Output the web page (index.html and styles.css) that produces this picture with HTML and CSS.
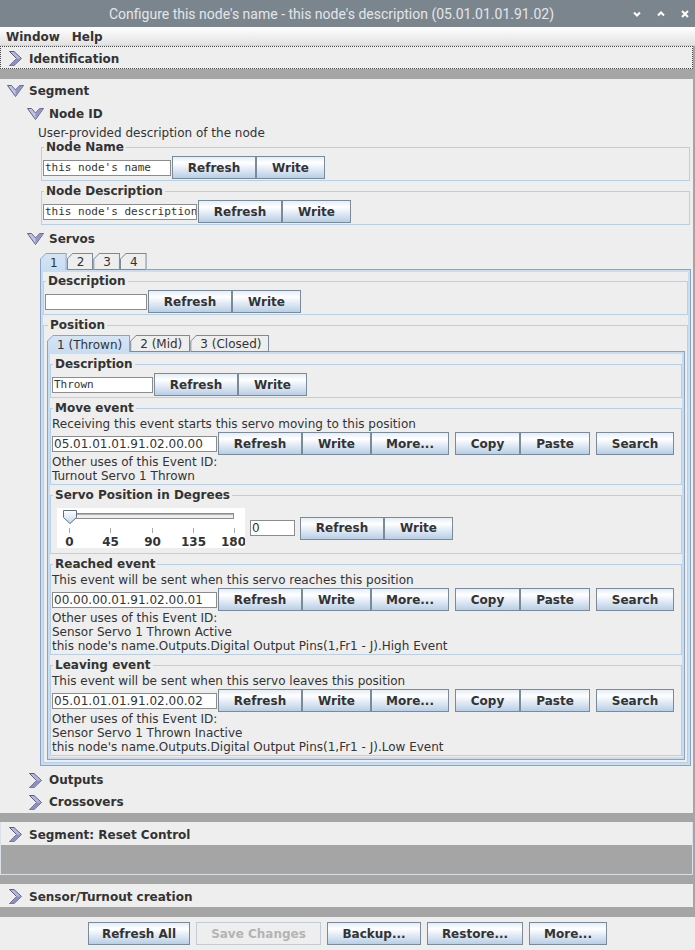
FILE: index.html
```html
<!DOCTYPE html>
<html lang="en">
<head>
<meta charset="utf-8">
<title>Configure this node's name</title>
<link rel="stylesheet" href="styles.css">
</head>
<body>
<svg class="defs" aria-hidden="true">
  <symbol id="chev-r" viewBox="0 0 13 15">
    <polygon points="0.5,0.5 5,0.5 12.5,7.5 5,14.5 0.5,14.5 7.5,7.5" fill="#b7b7dc" stroke="#5e5e82" stroke-width="1" stroke-linejoin="round"/>
    <polygon points="7.5,7.5 12.5,7.5 5,14.5 0.5,14.5" fill="#8f8fbd"/>
  </symbol>
  <symbol id="chev-d" viewBox="0 0 17 12">
    <polygon points="0.5,0.5 4.5,0.5 8.5,5 12.5,0.5 16.5,0.5 8.5,11.5" fill="#c3c3e4" stroke="#616188" stroke-width="1" stroke-linejoin="round"/>
    <polygon points="8.5,5 12.5,0.5 16,1 8.5,10.5" fill="#9494c2"/>
  </symbol>
</svg>

<div class="titlebar">
  <div class="title">Configure this node's name - this node's description (05.01.01.01.91.02)</div>
  <div class="wctl">
    <svg class="wi" viewBox="0 0 8 8"><path d="M1 2.5 L4 5.5 L7 2.5"/></svg>
    <svg class="wi" viewBox="0 0 8 8"><path d="M1 5.5 L4 2.5 L7 5.5"/></svg>
    <svg class="wi" viewBox="0 0 8 8"><path d="M1 1 L7 7 M7 1 L1 7"/></svg>
  </div>
</div>

<div class="menubar"><span class="menu">Window</span><span class="menu">Help</span></div>

<div class="main">
  <div class="head focus">
    <span class="ico r"><svg class="cr"><use href="#chev-r"/></svg></span><span>Identification</span>
  </div>

  <div class="segment">
    <div class="head seghead">
      <span class="ico"><svg class="cd"><use href="#chev-d"/></svg></span><span>Segment</span>
    </div>
    <div class="segbody">
      <div class="subhead first">
        <span class="ico"><svg class="cd"><use href="#chev-d"/></svg></span><span>Node ID</span>
      </div>
      <div class="groupbody">
        <div class="note">User-provided description of the node</div>
        <fieldset class="fs node">
          <legend>Node Name</legend>
          <div class="row">
            <span class="field mono w-nn">this node's name</span>
            <button class="btn refresh">Refresh</button><button class="btn write">Write</button>
          </div>
        </fieldset>
        <fieldset class="fs node">
          <legend>Node Description</legend>
          <div class="row">
            <span class="field mono w-nd">this node's description</span>
            <button class="btn refresh">Refresh</button><button class="btn write">Write</button>
          </div>
        </fieldset>
      </div>

      <div class="subhead">
        <span class="ico"><svg class="cd"><use href="#chev-d"/></svg></span><span>Servos</span>
      </div>
      <div class="tabbed servos">
        <div class="tabstrip">
          <div class="tab sel"><span>1</span></div>
          <div class="tab"><span>2</span></div>
          <div class="tab"><span>3</span></div>
          <div class="tab"><span>4</span></div>
          <div class="tabfill"></div>
        </div>
        <div class="tabpanel outer">
          <fieldset class="fs">
            <legend>Description</legend>
            <div class="row">
              <span class="field w-sd"></span>
              <button class="btn refresh">Refresh</button><button class="btn write">Write</button>
            </div>
          </fieldset>
          <fieldset class="fs pos">
            <legend>Position</legend>
            <div class="tabbed">
              <div class="tabstrip">
                <div class="tab sel"><span>1 (Thrown)</span></div>
                <div class="tab"><span>2 (Mid)</span></div>
                <div class="tab"><span>3 (Closed)</span></div>
                <div class="tabfill"></div>
              </div>
              <div class="tabpanel inner">
                <fieldset class="fs">
                  <legend>Description</legend>
                  <div class="row">
                    <span class="field mono w-pd">Thrown</span>
                    <button class="btn refresh">Refresh</button><button class="btn write">Write</button>
                  </div>
                </fieldset>

                <fieldset class="fs ev">
                  <legend>Move event</legend>
                  <div class="line">Receiving this event starts this servo moving to this position</div>
                  <div class="row evrow">
                    <span class="field w-ev">05.01.01.01.91.02.00.00</span>
                    <button class="btn refresh">Refresh</button><button class="btn write">Write</button><button class="btn more">More...</button>
                    <button class="btn copy">Copy</button><button class="btn paste">Paste</button>
                    <button class="btn search">Search</button>
                  </div>
                  <div class="line">Other uses of this Event ID:</div>
                  <div class="line">Turnout Servo 1 Thrown</div>
                </fieldset>

                <fieldset class="fs deg">
                  <legend>Servo Position in Degrees</legend>
                  <div class="row slrow">
                    <svg class="slider" width="188" height="40" viewBox="0 0 188 40">
                      <defs>
                        <linearGradient id="thumbg" x1="0" y1="0" x2="0" y2="1">
                          <stop offset="0" stop-color="#ffffff"/>
                          <stop offset="1" stop-color="#c4d7ec"/>
                        </linearGradient>
                      </defs>
                      <rect x="0" y="0" width="188" height="40" fill="#ffffff"/>
                      <rect x="9.5" y="5.5" width="167" height="5" fill="#eeeeee" stroke="#8e8e8e"/>
                      <line x1="10" y1="6.5" x2="176" y2="6.5" stroke="#b0b0b0"/>
                      <g stroke="#a8a8a8">
                        <line x1="12.5" y1="20" x2="12.5" y2="25"/>
                        <line x1="53.5" y1="20" x2="53.5" y2="25"/>
                        <line x1="95.5" y1="20" x2="95.5" y2="25"/>
                        <line x1="136.5" y1="20" x2="136.5" y2="25"/>
                        <line x1="177.5" y1="20" x2="177.5" y2="25"/>
                      </g>
                      <polygon points="6.5,2.5 19.5,2.5 19.5,9.5 13,15.5 6.5,9.5" fill="url(#thumbg)" stroke="#5f6f80"/>
                      <g class="ticks">
                        <text x="12.5" y="37.5">0</text>
                        <text x="53.5" y="37.5">45</text>
                        <text x="95.5" y="37.5">90</text>
                        <text x="136.5" y="37.5">135</text>
                        <text x="176.5" y="37.5">180</text>
                      </g>
                    </svg>
                    <span class="field w-deg">0</span>
                    <button class="btn refresh">Refresh</button><button class="btn write">Write</button>
                  </div>
                </fieldset>

                <fieldset class="fs ev">
                  <legend>Reached event</legend>
                  <div class="line">This event will be sent when this servo reaches this position</div>
                  <div class="row evrow">
                    <span class="field w-ev">00.00.00.01.91.02.00.01</span>
                    <button class="btn refresh">Refresh</button><button class="btn write">Write</button><button class="btn more">More...</button>
                    <button class="btn copy">Copy</button><button class="btn paste">Paste</button>
                    <button class="btn search">Search</button>
                  </div>
                  <div class="line">Other uses of this Event ID:</div>
                  <div class="line">Sensor Servo 1 Thrown Active</div>
                  <div class="line">this node's name.Outputs.Digital Output Pins(1,Fr1 - J).High Event</div>
                </fieldset>

                <fieldset class="fs ev">
                  <legend>Leaving event</legend>
                  <div class="line">This event will be sent when this servo leaves this position</div>
                  <div class="row evrow">
                    <span class="field w-ev">05.01.01.01.91.02.00.02</span>
                    <button class="btn refresh">Refresh</button><button class="btn write">Write</button><button class="btn more">More...</button>
                    <button class="btn copy">Copy</button><button class="btn paste">Paste</button>
                    <button class="btn search">Search</button>
                  </div>
                  <div class="line">Other uses of this Event ID:</div>
                  <div class="line">Sensor Servo 1 Thrown Inactive</div>
                  <div class="line">this node's name.Outputs.Digital Output Pins(1,Fr1 - J).Low Event</div>
                </fieldset>
              </div>
            </div>
          </fieldset>
        </div>
      </div>

      <div class="subhead">
        <span class="ico r"><svg class="cr"><use href="#chev-r"/></svg></span><span>Outputs</span>
      </div>
      <div class="subhead">
        <span class="ico r"><svg class="cr"><use href="#chev-r"/></svg></span><span>Crossovers</span>
      </div>
    </div>
  </div>

  <div class="reset">
    <div class="head">
      <span class="ico r"><svg class="cr"><use href="#chev-r"/></svg></span><span>Segment: Reset Control</span>
    </div>
    <div class="resetbody"></div>
  </div>

  <div class="head sensor">
    <span class="ico r"><svg class="cr"><use href="#chev-r"/></svg></span><span>Sensor/Turnout creation</span>
  </div>
</div>

<div class="bottombar">
  <button class="btn b-ra">Refresh All</button>
  <button class="btn b-sc" disabled>Save Changes</button>
  <button class="btn b-bk">Backup...</button>
  <button class="btn b-rs">Restore...</button>
  <button class="btn b-mo">More...</button>
</div>
</body>
</html>
```

FILE: styles.css
```css
* { box-sizing: border-box; }
html, body { margin: 0; padding: 0; }
body {
  width: 695px;
  height: 950px;
  overflow: hidden;
  background: #eeeeee;
  font-family: "DejaVu Sans", "Noto Sans", sans-serif;
  font-size: 12px;
  line-height: 14px;
  color: #333333;
}
.defs { display: block; width: 0; height: 0; overflow: hidden; }

/* title bar */
.titlebar {
  height: 27px;
  background: #7b858e;
  display: flex;
  align-items: center;
}
.title {
  flex: 1;
  padding-left: 109px;
  font-family: Roboto, "Noto Sans", sans-serif;
  font-size: 14px;
  color: #e3e6e9;
  white-space: nowrap;
}
.wctl { display: flex; align-items: center; gap: 16px; padding-right: 6px; }
.wi { width: 8px; height: 8px; fill: none; stroke: #ffffff; stroke-width: 2; }

/* menu */
.menubar {
  height: 19px;
  display: flex;
  align-items: center;
  gap: 12px;
  padding-left: 6px;
  padding-top: 1px;
  background: linear-gradient(#ffffff, #e2e2e2);
  border-bottom: 1px solid #d2d2d2;
  font-weight: bold;
}

/* main scroll area */
.main {
  height: 871px;
  overflow: hidden;
  background: #a5a5a5;
  padding-right: 2px;
}
.head {
  height: 23px;
  display: flex;
  align-items: center;
  padding-left: 7px;
  padding-top: 2px;
  background: #eeeeee;
  font-weight: bold;
}
.focus { border: 1px dotted #4a4a4a; padding-left: 6px; }
.ico { width: 22px; flex: none; display: flex; align-items: center; }
.ico.r { padding-left: 2px; }
.cr { width: 13px; height: 15px; }
.cd { width: 17px; height: 12px; }

.segment {
  margin-top: 10px;
  background: #eeeeee;
  padding-bottom: 1px;
}
.seghead { height: 22px; }
.segbody { padding-left: 20px; }
.subhead {
  height: 22px;
  display: flex;
  align-items: center;
  padding-left: 7px;
  padding-top: 2px;
  font-weight: bold;
}
.subhead.first { margin-top: 1px; }
.groupbody { padding-left: 18px; padding-bottom: 2px; }
.note { height: 14px; margin-top: 2px; line-height: 14px; }

/* titled borders */
.fs {
  margin: 0;
  padding: 2px 1px 1px 1px;
  border: 1px solid #b8cfe5;
  min-width: 0;
}
.fs legend {
  padding: 0 2px;
  margin-left: 1px;
  font-weight: bold;
  line-height: 14px;
}
.node { margin: 0 3px 0 3px; }
.fs + .fs { margin-top: 3px; }
.deg { padding: 6px 1px 5px 1px; }
.pos { padding: 3px 2px 2px 3px; }

.row { display: flex; align-items: center; }
.evrow { margin-top: 1px; }
.line { height: 14px; line-height: 14px; white-space: nowrap; }

.field {
  height: 16px;
  display: flex;
  align-items: center;
  background: #ffffff;
  border: 1px solid #8c8c8c;
  padding-left: 1px;
  margin-right: 1px;
  white-space: nowrap;
  overflow: hidden;
  flex: none;
}
.mono { font-family: "DejaVu Sans Mono", monospace; font-size: 11px; }
.w-nn { width: 128px; }
.w-nd { width: 154px; }
.w-sd { width: 102px; }
.w-pd { width: 101px; }
.w-ev { width: 165px; }
.w-deg { width: 45px; margin-left: 5px; margin-right: 5px; }

/* buttons */
.btn {
  height: 23px;
  margin: 0;
  padding: 0;
  flex: none;
  border: 1px solid #7a8a99;
  border-radius: 0;
  background: linear-gradient(#e4edf6 0%, #ffffff 28%, #dfe9f4 60%, #b8cfe5 100%);
  font-family: "DejaVu Sans", sans-serif;
  font-weight: bold;
  font-size: 12px;
  color: #333333;
  text-align: center;
}
.refresh { width: 84px; }
.write { width: 69px; }
.more { width: 78px; }
.copy { width: 65px; margin-left: 6px; }
.paste { width: 70px; }
.search { width: 78px; margin-left: 6px; }

/* slider */
.slrow { height: 40px; }
.slider { display: block; margin-left: 5px; flex: none; }
.ticks text {
  font-family: "DejaVu Sans", sans-serif;
  font-weight: bold;
  font-size: 12px;
  fill: #333333;
  text-anchor: middle;
}

/* tabs */
.tabbed.servos { margin: 4px 2px 2px 20px; }
.tabstrip { display: flex; height: 17px; }
.tab {
  background: #7a8a99;
  padding: 1px 1px 1px 1px;
  clip-path: polygon(0 6px, 6px 0, 100% 0, 100% 100%, 0 100%);
  flex: none;
}
.tab span {
  display: flex;
  align-items: center;
  height: 100%;
  padding: 1px 7px 0 9px;
  background: #eeeeee;
  clip-path: polygon(0 5px, 5px 0, 100% 0, 100% 100%, 0 100%);
  white-space: nowrap;
}
.servos > .tabstrip .tab span { padding: 1px 8px 0 9px; }
.tab.sel { background: #8ba4c5; padding-bottom: 0; }
.tab.sel span { background: linear-gradient(#d6e5f5, #c8ddf2); }
.tabfill { flex: 1; border-bottom: 1px solid #8ba4c5; }
.tabpanel {
  border: 1px solid #8ba4c5;
  border-top: none;
  box-shadow: inset 0 0 0 2px #c8ddf2;
}
.tabpanel.outer { padding: 4px 2px 2px 2px; }
.tabpanel.inner { padding: 5px 2px 3px 2px; }

/* bottom sections */
.reset {
  margin-top: 9px;
  border: 1px solid #d9e0e7;
  border-top: none;
}
.reset .head { padding-left: 6px; }
.resetbody { height: 29px; }
.sensor { margin-top: 9px; }

.bottombar {
  height: 33px;
  display: flex;
  align-items: center;
  justify-content: center;
  gap: 6px;
  background: #eeeeee;
}
.b-ra { width: 102px; }
.b-sc { width: 125px; }
.b-bk { width: 94px; }
.b-rs { width: 96px; }
.b-mo { width: 78px; }
.btn:disabled {
  background: #eeeeee;
  border-color: #c2ccd6;
  color: #b4b4b4;
}
```
